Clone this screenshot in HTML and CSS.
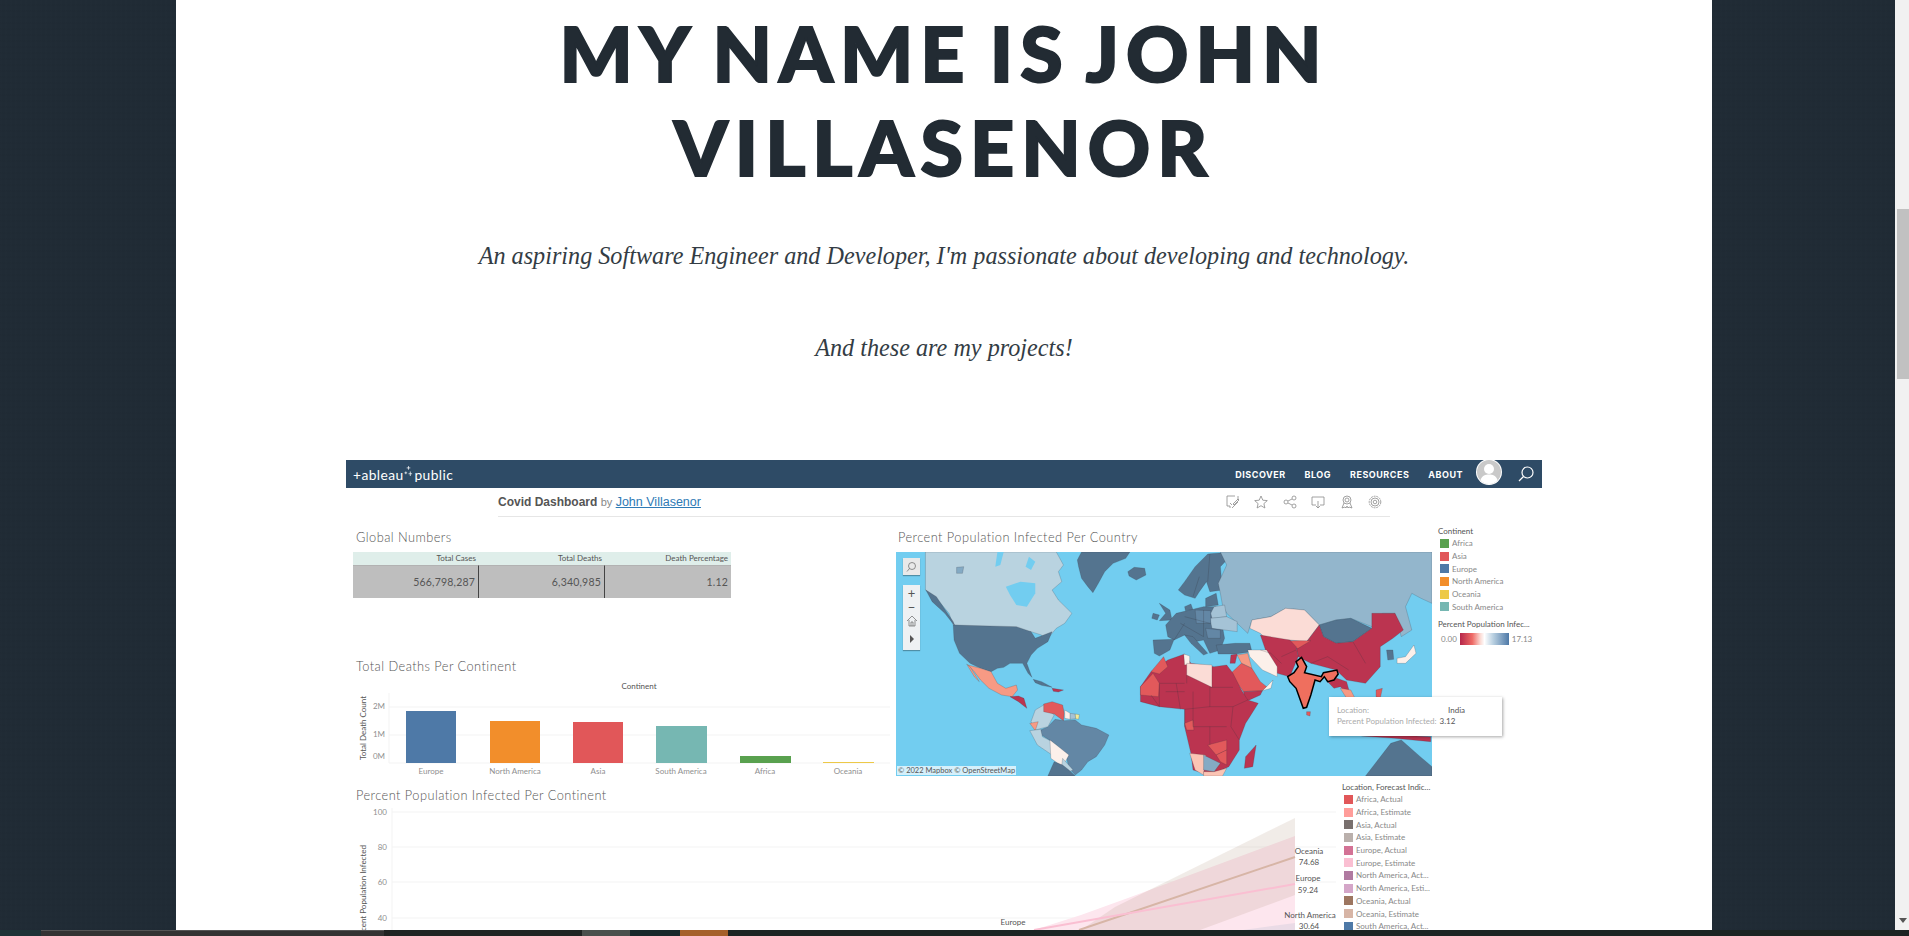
FILE: index.html
```html
<!DOCTYPE html>
<html lang="en">
<head>
    <meta charset="UTF-8">
    <meta name="viewport" content="width=device-width, initial-scale=1.0">
    <title>John Villasenor</title>
    <link rel="stylesheet" href="styles.css">
</head>
<body>
    <div class="window">
        <main class="column">
            <section class="hero">
                <h1>MY NAME IS JOHN<br>VILLASENOR</h1>
                <p class="intro">An aspiring Software Engineer and Developer, I'm passionate about developing and technology.</p>
                <p class="intro second">And these are my projects!</p>
            </section>

            <section class="embed">
                <header class="tab-header">
                    <div class="logo">+ableau<svg class="sparkle" viewBox="0 0 10 14"><path d="M5 1v4M3 3h4M2 7v3M.5 8.500h3M7 7v5M5 9.500h4"/></svg>public</div>
                    <nav class="tab-nav">
                        <a href="#discover">DISCOVER</a>
                        <a href="#blog">BLOG</a>
                        <a href="#resources">RESOURCES</a>
                        <a href="#about">ABOUT</a>
                    </nav>
                    <svg class="avatar" viewBox="0 0 26 26"><circle cx="13" cy="13" r="13" fill="#fff"/><circle cx="13" cy="13" r="12" fill="#c9c9c9"/><circle cx="13" cy="10" r="5" fill="#fff"/><path d="M4.500 21c1.500-4.500 5-5.500 8.500-5.500s7 1 8.500 5.500c-2 2.500-5 4-8.500 4s-6.500-1.500-8.500-4z" fill="#fff"/></svg>
                    <svg class="search" viewBox="0 0 16 16"><circle cx="9.500" cy="6.500" r="5.500"/><path d="M5.500 10.500L1 15"/></svg>
                </header>

                <div class="viz-bar">
                    <div class="viz-title"><b>Covid Dashboard</b> <span>by</span> <a href="#john">John Villasenor</a></div>
                    <div class="viz-icons">
                        <svg viewBox="0 0 14 14"><path d="M9 1H1v10h3v2M12 1v4M4 8l2 2M7 9l5-5 1 1-5 5zM6 13l6-6"/></svg>
                        <svg viewBox="0 0 14 14"><path d="M7 1l1.800 4.200 4.500.4-3.400 3 1 4.400L7 10.700 3.100 13l1-4.400-3.400-3 4.500-.4z"/></svg>
                        <svg viewBox="0 0 14 14"><circle cx="3" cy="7" r="2"/><circle cx="11" cy="3" r="2"/><circle cx="11" cy="11" r="2"/><path d="M5 6l4-2M5 8l4 2"/></svg>
                        <svg viewBox="0 0 14 14"><path d="M5 10H1V2h12v8H9M7 6v7M5 11l2 2 2-2"/></svg>
                        <svg viewBox="0 0 14 14"><circle cx="7" cy="5" r="4"/><circle cx="7" cy="5" r="2"/><path d="M4 8l-2 5 3-1 1 1 1-2 1 2 1-1 3 1-2-5"/></svg>
                        <svg viewBox="0 0 14 14"><circle cx="7" cy="7" r="5.800" stroke-dasharray="2 .8"/><circle cx="7" cy="7" r="4"/><circle cx="7" cy="7" r="1.800"/></svg>
                    </div>
                </div>

                <div class="dash-top">
                    <div class="dash-left">
                        <h3 class="viz-heading">Global Numbers</h3>
                        <div class="numbers">
                            <div class="num-head">Total Cases</div>
                            <div class="num-head">Total Deaths</div>
                            <div class="num-head">Death Percentage</div>
                            <div class="num-val">566,798,287</div>
                            <div class="num-val">6,340,985</div>
                            <div class="num-val">1.12</div>
                        </div>
                        <h3 class="viz-heading deaths">Total Deaths Per Continent</h3>
                        <svg class="bar-chart" viewBox="353 680 543 100">
                            <text class="axis-title" x="639" y="689" text-anchor="middle">Continent</text>
                            <path class="grid" d="M389 707H890M389 735H890M389 763H890M389 693V763"/>
                            <text class="tick" x="385" y="709" text-anchor="end">2M</text>
                            <text class="tick" x="385" y="737" text-anchor="end">1M</text>
                            <text class="tick" x="385" y="759" text-anchor="end">0M</text>
                            <text class="axis-title" transform="translate(366 760) rotate(-90)">Total Death Count</text>
                            <rect class="c-europe" x="406" y="711" width="50" height="52"/>
                            <rect class="c-namerica" x="490" y="721" width="50" height="42"/>
                            <rect class="c-asia" x="573" y="722" width="50" height="41"/>
                            <rect class="c-samerica" x="656" y="726" width="51" height="37"/>
                            <rect class="c-africa" x="740" y="756" width="51" height="7"/>
                            <rect class="c-oceania" x="823" y="762" width="51" height="1"/>
                            <text class="tick" x="431" y="774" text-anchor="middle">Europe</text>
                            <text class="tick" x="515" y="774" text-anchor="middle">North America</text>
                            <text class="tick" x="598" y="774" text-anchor="middle">Asia</text>
                            <text class="tick" x="681" y="774" text-anchor="middle">South America</text>
                            <text class="tick" x="765" y="774" text-anchor="middle">Africa</text>
                            <text class="tick" x="848" y="774" text-anchor="middle">Oceania</text>
                        </svg>
                    </div>

                    <div class="dash-map">
                        <h3 class="viz-heading">Percent Population Infected Per Country</h3>
                        <div class="map">
                            <svg class="map-svg" viewBox="14 306 1274 672" preserveAspectRatio="none">
                                <rect class="ocean" x="14" y="306" width="1274" height="672"/>
                                <!-- north america -->
                                <polygon class="f-canada" points="84,306 395,306 412,345 400,365 408,395 385,420 400,450 432,490 415,520 395,535 370,572 360,555 335,545 150,525 140,490 120,460 105,440 84,420"/>
                                <polygon class="ocean" points="275,410 310,395 345,400 345,430 325,470 300,465 285,435"/>
                                <polygon class="ocean" points="255,306 270,306 262,345 250,350"/>
                                <polygon class="ocean" points="330,320 345,335 335,360 322,350"/>
                                <polygon class="f-mid" points="158,352 175,350 172,370 158,370"/>
                                <polygon class="f-dark" points="85,420 110,440 150,515 155,530 130,490 100,455"/>
                                <polygon class="f-dark" points="150,525 300,530 335,545 345,565 365,555 385,545 375,575 350,595 335,615 325,640 337,682 328,670 315,640 285,640 270,652 255,655 240,665 215,655 190,640 165,610 152,570"/>
                                <polygon class="f-dark" points="445,330 455,306 570,306 560,325 530,340 510,365 495,400 482,428 470,410 455,385 448,350"/>
                                <polygon class="f-dark" points="565,365 580,352 605,355 608,375 585,390 568,378"/>
                                <polygon class="f-salmon" points="185,645 215,655 240,665 255,700 275,715 300,705 303,720 290,740 265,735 235,715 215,690 200,665"/>
                                <polygon class="f-salmon" points="182,642 190,650 212,695 200,680"/>
                                <polygon class="f-red" points="285,740 305,738 318,745 325,775 305,755"/>
                                <polygon class="f-dark" points="340,688 360,695 385,712 360,706 345,698"/>
                                <polygon class="f-red" points="385,715 412,720 400,726 388,724"/>
                                <!-- south america -->
                                <polygon class="f-brazil" points="375,830 392,808 415,812 440,810 455,825 490,835 520,855 510,885 490,920 470,935 455,960 440,975 425,955 420,925 405,895 385,875 360,855 358,840"/>
                                <polygon class="f-canada" points="345,780 365,765 390,795 375,830 345,840 335,815"/>
                                <polygon class="f-coral" points="365,762 385,755 410,765 414,790 412,812 390,792 365,785"/>
                                <polygon class="f-salmon" points="332,820 352,815 345,842"/>
                                <polygon class="f-canada" points="332,842 358,838 362,860 385,875 402,925 385,915 350,885"/>
                                <polygon class="f-cream" points="380,870 405,895 425,915 410,950 382,925"/>
                                <polygon class="f-canada" points="410,925 435,960 425,965 408,945"/>
                                <polygon class="f-dark" points="375,978 390,935 410,945 425,960 440,978"/>
                                <polygon class="f-cream" points="415,780 428,790 428,808 415,805"/>
                                <polygon class="f-light" points="428,790 440,792 441,806 428,808"/>
                                <polygon class="f-lemon" points="440,792 450,794 448,808 441,806"/>
                                <!-- europe -->
                                <polygon class="f-dark" points="685,420 700,395 725,350 755,312 790,308 800,330 785,350 790,420 760,425 752,395 735,425 725,445 700,435"/>
                                <polygon class="f-dark" points="640,460 665,480 670,510 640,512 655,490"/>
                                <polygon class="f-dark" points="625,490 640,495 635,510 622,505"/>
                                <polygon class="f-dark" points="700,470 715,462 720,480 702,482"/>
                                <polygon class="f-dark" points="655,525 680,490 720,478 745,470 775,470 770,500 790,530 795,565 785,600 760,610 745,570 725,575 700,555 675,570 660,560"/>
                                <polygon class="f-dark" points="625,570 675,568 665,600 640,618 628,610"/>
                                <polygon class="f-dark" points="700,555 720,560 755,610 745,615 715,580"/>
                                <polygon class="f-dark" points="775,585 820,580 855,580 860,605 820,612 780,612"/>
                                <!-- russia and asia -->
                                <polygon class="f-russia" points="785,306 1288,306 1288,460 1262,445 1240,430 1225,470 1240,540 1215,560 1200,490 1170,490 1145,530 1095,505 1060,510 1020,525 985,480 940,475 905,500 860,510 850,550 825,520 800,490 790,465 785,430 780,400 800,345"/>
                                <polygon class="f-dark" points="750,445 775,430 780,465 750,470"/>
                                <polygon class="f-light" points="762,490 770,470 795,465 800,500 765,505"/>
                                <polygon class="f-light" points="760,505 800,500 825,515 825,545 765,535"/>
                                <polygon class="f-brazil" points="725,480 762,482 762,520 728,520"/>
                                <polygon class="f-brazil" points="750,535 785,540 785,565 755,565"/>
                                <polygon class="f-pale" points="860,510 905,500 940,475 985,480 1020,525 990,575 950,570 900,575 880,550 855,535"/>
                                <polygon class="f-dark" points="1020,525 1060,510 1095,505 1145,535 1100,575 1060,580 1030,560"/>
                                <polygon class="f-red" points="1020,525 1030,560 1060,580 1100,575 1145,535 1145,490 1170,490 1200,490 1220,540 1195,565 1165,590 1165,650 1130,700 1085,690 1060,660 1000,640 970,620 965,590 990,575"/>
                                <polygon class="f-coral" points="950,572 1000,572 970,595 945,590"/>
                                <polygon class="f-red" points="880,555 950,570 965,590 970,620 950,680 920,670 895,610"/>
                                <polygon class="f-cream" points="850,600 895,600 920,650 920,680 885,660 855,620"/>
                                <polygon class="f-salmon" points="825,615 850,610 860,655 835,640"/>
                                <polygon class="f-red" points="810,615 825,612 820,640 808,640"/>
                                <polygon class="f-coral" points="810,670 835,640 860,655 880,695 895,710 885,722 840,725 825,700"/>
                                <polygon class="f-red" points="840,725 885,722 880,735 845,755"/>
                                <polygon class="f-cream" points="885,722 895,710 910,690 905,715"/>
                                <polygon class="f-red" points="1040,695 1062,685 1085,695 1095,740 1070,710 1055,715"/>
                                <polygon class="f-salmon" points="1070,715 1095,720 1105,745 1085,745"/>
                                <polygon class="f-coral" points="1155,720 1170,715 1165,745 1155,740"/>
                                <polygon class="f-cream" points="1205,625 1225,620 1245,585 1250,610 1225,640 1205,640"/>
                                <polygon class="f-dark" points="1180,600 1195,600 1197,628 1183,630"/>
                                <polygon class="f-red" points="1120,850 1285,860 1285,875 1200,865 1120,858"/>
                                <polygon class="f-dark" points="1130,978 1190,880 1215,870 1260,920 1288,950 1288,978"/>
                                <!-- africa -->
                                <polygon class="f-red" points="595,710 620,665 660,630 700,612 715,640 770,650 800,645 815,670 835,720 850,750 875,760 855,800 845,820 830,870 830,900 805,950 760,975 720,960 715,910 700,830 700,778 640,770 595,755"/>
                                <polygon class="f-coral" points="620,665 650,620 660,650 640,672"/>
                                <polygon class="f-coral" points="595,710 625,670 640,700 638,740 595,735"/>
                                <polygon class="f-cream" points="698,612 712,618 712,642 700,645"/>
                                <polygon class="f-pale" points="705,640 765,645 765,712 705,675"/>
                                <polygon class="f-coral" points="700,820 720,810 722,840 705,840"/>
                                <polygon class="f-coral" points="755,885 800,870 800,900 775,915"/>
                                <polygon class="f-coral" points="775,915 800,900 800,945 785,935"/>
                                <polygon class="f-peach" points="712,910 750,915 745,975 725,960"/>
                                <polygon class="f-mid" points="745,915 785,940 770,965 745,960"/>
                                <polygon class="f-peach" points="745,965 770,965 800,955 790,978 745,978"/>
                                <polygon class="f-red" points="845,920 870,885 862,950 842,955"/>
                                <polygon class="f-coral" points="990,785 999,785 998,798 990,795"/>
                                <path class="borders" d="M640 700L700 700M705 675L705 700M760 712L815 712M760 712V770L700 778M700 778V830M760 770L815 770L850 750M815 770L810 830L830 870M720 830H800M640 770V700M680 700L690 778M655 725H700M720 725V830M760 830V885M620 735L640 770M1000 640L1040 620L1090 660M1100 575L1130 640M690 520L745 560M745 480V560M700 500L760 520M675 570L700 520M720 440L735 380M760 312L755 395M880 600L905 610L930 640M930 620L965 600"/>
                                <polygon class="f-india" points="965,635 978,622 990,650 985,668 1025,680 1030,668 1062,660 1065,672 1055,690 1040,695 1032,680 1022,695 1010,690 1000,735 990,772 982,775 965,715 950,695 945,680 960,668 970,650"/>
                            </svg>
                            <button class="map-btn map-search"><svg viewBox="0 0 12 12"><circle cx="7" cy="5" r="3.500"/><path d="M4.500 7.500L2 10.500"/></svg></button>
                            <div class="map-zoom">
                                <span>+</span>
                                <span>&minus;</span>
                                <svg viewBox="0 0 12 12"><path d="M1 6l5-5 5 5M3 5v6h6V5M5 11V7h2v4"/></svg>
                                <i class="map-play"></i>
                            </div>
                            <div class="map-credit">&copy; 2022 Mapbox &copy; OpenStreetMap</div>
                            <div class="tooltip">
                                <div class="tip-row"><span class="tip-label">Location:</span><b class="tip-place">India</b></div>
                                <div class="tip-row"><span class="tip-label">Percent Population Infected:</span><b>3.12</b></div>
                            </div>
                        </div>
                    </div>

                    <aside class="legend legend-top">
                        <h4>Continent</h4>
                        <div class="legend-item"><i class="c-africa"></i>Africa</div>
                        <div class="legend-item"><i class="c-asia"></i>Asia</div>
                        <div class="legend-item"><i class="c-europe"></i>Europe</div>
                        <div class="legend-item"><i class="c-namerica"></i>North America</div>
                        <div class="legend-item"><i class="c-oceania"></i>Oceania</div>
                        <div class="legend-item"><i class="c-samerica"></i>South America</div>
                        <h4 class="legend-gap">Percent Population Infec...</h4>
                        <div class="scale"><span>0.00</span><i class="scale-bar"></i><span>17.13</span></div>
                    </aside>
                </div>

                <div class="dash-bottom">
                    <div class="dash-line">
                        <h3 class="viz-heading">Percent Population Infected Per Continent</h3>
                        <svg class="line-chart" viewBox="353 805 989 125">
                            <path class="grid" d="M392 812H1336M392 847H1336M392 882H1336M392 918H1336M392 808V930"/>
                            <text class="tick" x="387" y="815" text-anchor="end">100</text>
                            <text class="tick" x="387" y="850" text-anchor="end">80</text>
                            <text class="tick" x="387" y="885" text-anchor="end">60</text>
                            <text class="tick" x="387" y="921" text-anchor="end">40</text>
                            <text class="axis-title" transform="translate(366 845) rotate(-90)" text-anchor="end">Percent Population Infected</text>
                            <polygon class="band-pink" points="1034,930 1081,915 1128,898 1295,836 1295,930"/>
                            <polygon class="band-beige" points="1081,930 1115,907 1295,818 1295,895 1200,930"/>
                            <polygon class="band-mauve" points="1243,930 1295,923 1295,930"/>
                            <path class="line-oceania" d="M1079 930L1295 857"/>
                            <path class="line-europe" d="M1034 930L1295 884"/>
                            <text class="mark" x="1013" y="925" text-anchor="middle">Europe</text>
                            <text class="mark" x="1309" y="854" text-anchor="middle">Oceania</text>
                            <text class="mark" x="1309" y="865" text-anchor="middle">74.68</text>
                            <text class="mark" x="1308" y="881" text-anchor="middle">Europe</text>
                            <text class="mark" x="1308" y="893" text-anchor="middle">59.24</text>
                            <text class="mark" x="1310" y="918" text-anchor="middle">North America</text>
                            <text class="mark" x="1309" y="929" text-anchor="middle">30.64</text>
                        </svg>
                    </div>
                    <aside class="legend legend-bottom">
                        <h4>Location, Forecast Indic...</h4>
                        <div class="legend-item"><i class="c-asia"></i>Africa, Actual</div>
                        <div class="legend-item"><i class="l-africa-est"></i>Africa, Estimate</div>
                        <div class="legend-item"><i class="l-asia"></i>Asia, Actual</div>
                        <div class="legend-item"><i class="l-asia-est"></i>Asia, Estimate</div>
                        <div class="legend-item"><i class="l-europe"></i>Europe, Actual</div>
                        <div class="legend-item"><i class="l-europe-est"></i>Europe, Estimate</div>
                        <div class="legend-item"><i class="l-na"></i>North America, Act...</div>
                        <div class="legend-item"><i class="l-na-est"></i>North America, Esti...</div>
                        <div class="legend-item"><i class="l-oceania"></i>Oceania, Actual</div>
                        <div class="legend-item"><i class="l-oceania-est"></i>Oceania, Estimate</div>
                        <div class="legend-item"><i class="c-europe"></i>South America, Act...</div>
                    </aside>
                </div>
            </section>
        </main>

        <div class="scrollbar">
            <div class="scroll-thumb"></div>
            <i class="scroll-down"></i>
        </div>
    </div>

    <footer class="taskbar">
        <div class="task-start"></div>
        <div class="task-window"></div>
        <div class="task-gap"></div>
        <div class="task-grey"></div>
        <div class="task-teal"></div>
        <div class="task-orange"></div>
        <div class="task-rest"></div>
    </footer>
</body>
</html>
```

FILE: styles.css
```css
html, body {
    margin: 0;
    padding: 0;
    height: 936px;
    overflow: hidden;
}

body {
    font-family: "Lato", "Noto Sans", sans-serif;
    background: #202b35;
}

.window {
    display: flex;
    height: 930px;
    background-color: #202b35;
    background-image:
        repeating-linear-gradient(90deg, rgba(255, 255, 255, 0.004) 0 2px, transparent 2px 5px),
        repeating-linear-gradient(0deg, rgba(0, 0, 0, 0.015) 0 2px, transparent 2px 6px);
}

.column {
    width: 1536px;
    margin-left: 176px;
    margin-right: 183px;
    flex-shrink: 0;
    background: #fff;
    overflow: hidden;
}

/* hero */
.hero {
    text-align: center;
    color: #222b33;
}

.hero h1 {
    margin: 0;
    padding-top: 5px;
    font-family: "Lato", sans-serif;
    font-size: 77px;
    font-weight: 900;
    line-height: 94px;
    letter-spacing: 7px;
    word-spacing: -7px;
    -webkit-text-stroke: 2px #222b33;
}

.intro {
    margin: 43px 0 0;
    font-family: "Liberation Serif", serif;
    font-style: italic;
    font-size: 24.200px;
    line-height: 40px;
    color: #333c44;
}

.intro.second {
    margin-top: 52px;
}

/* tableau embed */
.embed {
    width: 1196px;
    margin: 92px 0 0 170px;
    color: #666;
}

.tab-header {
    display: flex;
    align-items: center;
    height: 28px;
    padding: 0 9px 0 7px;
    background: #2e4b66;
    color: #fff;
    overflow: hidden;
}

.logo {
    display: flex;
    align-items: center;
    font-size: 13.800px;
    font-weight: 400;
    letter-spacing: 0.400px;
}

.sparkle {
    width: 9px;
    height: 13px;
    margin: 0 1px 5px;
}

.sparkle path {
    fill: none;
    stroke: #fff;
    stroke-width: 0.800;
}

.tab-nav {
    display: flex;
    gap: 19px;
    margin-left: auto;
    margin-right: 13px;
}

.tab-nav a {
    font-family: "Inter", sans-serif;
    font-size: 9px;
    font-weight: 700;
    letter-spacing: 0.500px;
    color: #fff;
    text-decoration: none;
}

.avatar {
    width: 26px;
    height: 26px;
    margin-top: -5px;
    margin-right: 16px;
}

.search {
    width: 16px;
    height: 16px;
    margin-right: -1px;
}

.search circle, .search path {
    fill: none;
    stroke: #fff;
    stroke-width: 1.200;
}

.viz-bar {
    display: flex;
    align-items: center;
    justify-content: space-between;
    box-sizing: border-box;
    width: 892px;
    height: 29px;
    margin-left: 152px;
    padding-right: 8px;
    border-bottom: 1px solid #e6e6e6;
}

.viz-title {
    font-family: "Liberation Sans", sans-serif;
    font-size: 12px;
}

.viz-title b {
    color: #555;
}

.viz-title span {
    color: #888;
    font-size: 11px;
}

.viz-title a {
    color: #2e7ab5;
    font-size: 12.500px;
}

.viz-icons {
    display: flex;
    gap: 14.500px;
}

.viz-icons svg {
    width: 14px;
    height: 14px;
}

.viz-icons svg * {
    fill: none;
    stroke: #8a8a8a;
    stroke-width: 0.800;
}

.viz-heading {
    margin: 0;
    padding-left: 3px;
    font-size: 12.800px;
    font-weight: 300;
    line-height: 16px;
    letter-spacing: 0.450px;
    color: #555;
}

/* dashboard rows */
.dash-top {
    display: grid;
    grid-template-columns: 550px 536px 110px;
    height: 263px;
}

.dash-left {
    padding: 12px 0 0 7px;
}

.numbers {
    display: grid;
    grid-template-columns: repeat(3, 126px);
    grid-template-rows: 13px 33px;
    margin-top: 7px;
    font-size: 8px;
    text-align: right;
}

.num-head {
    padding-right: 3px;
    background: #dfeeea;
    line-height: 13px;
    color: #555;
}

.num-val {
    padding-right: 3px;
    background: #bebebe;
    font-size: 10.500px;
    line-height: 33px;
    letter-spacing: 0.200px;
    color: #555;
    border-top: 1px solid #b2b2b2;
    box-sizing: border-box;
}

.num-val:nth-child(4), .num-val:nth-child(5) {
    border-right: 1px solid #444;
}

.viz-heading.deaths {
    margin-top: 60px;
}

.bar-chart {
    display: block;
    width: 543px;
    height: 100px;
    margin-top: 6px;
}

.line-chart {
    display: block;
    width: 989px;
    height: 125px;
    margin-top: 2px;
}

.grid {
    fill: none;
    stroke: #f3f3f3;
    stroke-width: 1;
}

.tick {
    font-size: 8px;
    fill: #8f8f8f;
}

.axis-title {
    font-size: 8px;
    fill: #555;
}

.mark {
    font-size: 8px;
    fill: #555;
}

.c-africa { fill: #59a14f; background: #59a14f; }
.c-asia { fill: #e15759; background: #e15759; }
.c-europe { fill: #4e79a7; background: #4e79a7; }
.c-namerica { fill: #f28e2b; background: #f28e2b; }
.c-oceania { fill: #edc948; background: #edc948; }
.c-samerica { fill: #76b7b2; background: #76b7b2; }

.l-africa-est { background: #ff9d9a; }
.l-asia { background: #79706e; }
.l-asia-est { background: #bab0ac; }
.l-europe { background: #d37295; }
.l-europe-est { background: #fabfd2; }
.l-na { background: #b07aa1; }
.l-na-est { background: #d4a6c8; }
.l-oceania { background: #9d7660; }
.l-oceania-est { background: #d7b5a6; }

/* map */
.dash-map {
    padding-top: 12px;
}

.dash-map .viz-heading {
    padding-left: 2px;
}

.map {
    position: relative;
    width: 536px;
    height: 224px;
    margin-top: 7px;
}

.map-svg {
    display: block;
    width: 100%;
    height: 100%;
}

.map-svg polygon {
    stroke: rgba(50, 50, 60, 0.4);
    stroke-width: 0.500;
    vector-effect: non-scaling-stroke;
}

.map-svg .borders {
    fill: none;
    stroke: rgba(50, 50, 60, 0.45);
    stroke-width: 0.500;
    vector-effect: non-scaling-stroke;
}

.ocean { fill: #72cdf0; }
.map-svg .ocean { stroke: none; }
.f-canada { fill: #b9d3e0; }
.f-russia { fill: #93b6cc; }
.f-dark { fill: #54748f; }
.f-brazil { fill: #6387a5; }
.f-mid { fill: #84aac4; }
.f-light { fill: #a5c3d6; }
.f-red { fill: #bb3450; }
.f-coral { fill: #e2595b; }
.f-salmon { fill: #f79a84; }
.f-peach { fill: #fbc4b4; }
.f-pale { fill: #fbdcd6; }
.f-cream { fill: #fcf0ea; }
.f-lemon { fill: #f2eb9a; }

.map-svg .f-india {
    fill: #ef6f5e;
    stroke: #000;
    stroke-width: 1.500;
}

.map-btn {
    position: absolute;
    left: 7px;
    top: 6px;
    width: 17px;
    height: 17px;
    padding: 2px;
    border: none;
    background: #e9e9e9;
    box-shadow: 0 1px 1px rgba(0, 0, 0, 0.3);
}

.map-btn svg, .map-zoom svg {
    display: block;
    width: 12px;
    height: 12px;
    fill: none;
    stroke: #666;
    stroke-width: 0.700;
}

.map-zoom {
    position: absolute;
    left: 7px;
    top: 33px;
    display: flex;
    flex-direction: column;
    align-items: center;
    gap: 2px;
    width: 17px;
    height: 65px;
    background: #eef1f3;
    box-shadow: 0 1px 1px rgba(0, 0, 0, 0.3);
    font-size: 13px;
    line-height: 12px;
    color: #555;
}

.map-zoom span:first-child {
    margin-top: 2px;
}

.map-play {
    width: 0;
    height: 0;
    margin-top: 6px;
    border-left: 4px solid #555;
    border-top: 4px solid transparent;
    border-bottom: 4px solid transparent;
}

.map-credit {
    position: absolute;
    left: 1px;
    bottom: 1px;
    padding: 0 1px;
    background: rgba(255, 255, 255, 0.7);
    font-size: 7.500px;
    line-height: 9px;
    color: #555;
}

.tooltip {
    position: absolute;
    left: 433px;
    top: 145px;
    box-sizing: border-box;
    width: 173px;
    height: 39px;
    padding: 8px 8px;
    background: #fff;
    box-shadow: 1px 1px 3px rgba(0, 0, 0, 0.35);
    font-size: 8px;
    line-height: 11px;
    color: #aaa;
}

.tip-row {
    display: flex;
    gap: 3px;
}

.tip-row b {
    font-weight: 400;
    color: #555;
}

.tip-label {
    white-space: nowrap;
}

.tip-place {
    margin-left: 76px;
}

/* legends */
.legend {
    font-size: 8px;
    color: #888;
}

.legend h4 {
    margin: 0;
    font-size: 8px;
    font-weight: 400;
    line-height: 12px;
    color: #555;
}

.legend-item {
    display: flex;
    align-items: center;
    gap: 3px;
    height: 12.700px;
    padding-left: 2px;
    white-space: nowrap;
}

.legend-item i {
    width: 9px;
    height: 9px;
    flex-shrink: 0;
}

.legend-top {
    padding: 8px 0 0 6px;
}

.legend-gap {
    padding-top: 5px;
}

.scale {
    display: flex;
    align-items: center;
    gap: 3px;
    margin-top: 3px;
    padding-left: 3px;
}

.scale-bar {
    width: 49px;
    height: 12px;
    background: linear-gradient(90deg, #b5264a, #ee6a65 25%, #fbdcd6 42%, #fff 50%, #b8cfe0 68%, #4e79a7);
}

.dash-bottom {
    display: grid;
    grid-template-columns: 996px 200px;
}

.dash-line {
    padding: 7px 0 0 7px;
}

.legend-bottom {
    padding-top: 1px;
}

.band-pink { fill: #fde6ee; }
.band-beige { fill: rgba(170, 140, 120, 0.17); }
.band-mauve { fill: #eadbe6; }

.line-oceania {
    fill: none;
    stroke: #d7b5a6;
    stroke-width: 2;
}

.line-europe {
    fill: none;
    stroke: #fabfd2;
    stroke-width: 2;
}

/* browser chrome */
.scrollbar {
    display: flex;
    flex-direction: column;
    width: 14px;
    flex-shrink: 0;
    background: #f1f1f1;
}

.scroll-thumb {
    width: 12px;
    height: 170px;
    margin: 209px 0 0 2px;
    background: #c1c1c1;
}

.scroll-down {
    width: 0;
    height: 0;
    margin: auto 0 7px 4px;
    border-top: 5px solid #555;
    border-left: 4px solid transparent;
    border-right: 4px solid transparent;
}

.taskbar {
    display: flex;
    height: 6px;
}

.task-start { width: 41px; background: #1d3336; }
.task-window { width: 343px; background: #333; border-top: 1px solid #555; box-sizing: border-box; }
.task-gap { width: 198px; background: #1f2322; }
.task-grey { width: 48px; background: #4a4f4c; }
.task-teal { width: 50px; background: #17282a; }
.task-orange { width: 48px; background: #a5602a; }
.task-rest { flex: 1; background: #1c2322; }
```
